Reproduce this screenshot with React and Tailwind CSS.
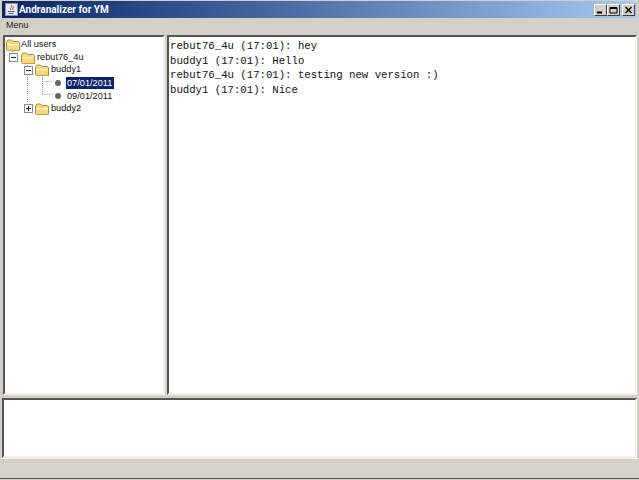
import React from 'react';

const Folder = () => (
    <svg width="16" height="14" viewBox="0 0 16 14" className="shrink-0 relative">
        <path d="M1.5 11.5V3.5L3 2h3.5L8 3.5h5.5l1 1v8H2.5z" fill="#f8d878" stroke="#a89048" strokeWidth="1" />
        <path d="M2.5 6h11.5v1.5H2.5z" fill="#fff4c0" />
        <path d="M2 12.5h12" stroke="#c8a040" strokeWidth="1" />
    </svg>
);

const Expander = ({ open }) => (
    <svg width="9" height="9" viewBox="0 0 9 9" className="shrink-0 relative">
        <rect x="0.5" y="0.5" width="8" height="8" fill="#fff" stroke="#8a8a8a" />
        <path d={open ? 'M2 4.5h5' : 'M2 4.5h5M4.5 2v5'} stroke="#222" />
    </svg>
);

const WinButton = ({ children }) => (
    <div className="w-[13px] h-[12px] bg-[#d4d0c8] border border-t-white border-l-white border-r-[#404040] border-b-[#404040] flex items-center justify-center">
        <svg width="9" height="8" viewBox="0 0 9 8">{children}</svg>
    </div>
);

const TreeRow = ({ indent, children }) => (
    <div className={`relative flex items-center h-[12.8px] ${indent}`}>{children}</div>
);

const Leaf = ({ label, selected }) => (
    <TreeRow indent="pl-[50px]">
        <span className="w-[6px] h-[6px] rounded-full bg-[#666666] shrink-0" />
        <span className={`ml-[5px] pl-[1px] pr-[2px] leading-[12px] ${selected ? 'bg-[#0a246a] text-white' : ''}`}>{label}</span>
    </TreeRow>
);

export default function App() {
    const messages = [
        'rebut76_4u (17:01): hey',
        'buddy1 (17:01): Hello',
        'rebut76_4u (17:01): testing new version :)',
        'buddy1 (17:01): Nice',
    ];

    return (
        <div className="w-[639px] h-[480px] bg-[#d4d0c8] flex flex-col overflow-hidden font-['Liberation_Sans',sans-serif]">
            {/* Title bar */}
            <div className="h-[17px] mx-[2px] mt-[1px] shrink-0 flex items-center bg-gradient-to-r from-[#0a246a] to-[#a6caf0] text-white">
                <svg width="13" height="13" viewBox="0 0 13 13" className="ml-[3px] shrink-0">
                    <rect x="0.5" y="0.5" width="12" height="12" fill="#e8e8f0" stroke="#8890b0" />
                    <path d="M6 2c2 2-2 3 0 5M8 3c1 2-1 2 0 4" stroke="#d06020" fill="none" />
                    <path d="M3 8.5h6.5M3.5 10.5h5" stroke="#4060a0" />
                </svg>
                <span className="ml-[1px] text-[10px] font-bold leading-none font-['Roboto',sans-serif]">Andranalizer for YM</span>
                <div className="ml-auto mr-[2px] flex items-center">
                    <WinButton><path d="M1 6.5h5" stroke="#000" strokeWidth="2" /></WinButton>
                    <WinButton><path d="M1 1.5h7v5.5H1zM1 2.5h7" fill="none" stroke="#000" /></WinButton>
                    <div className="ml-[2px]">
                        <WinButton><path d="M1.5 1l6 6M7.5 1l-6 6" stroke="#000" strokeWidth="1.4" /></WinButton>
                    </div>
                </div>
            </div>

            {/* Menu */}
            <div className="h-[14px] mt-[1px] shrink-0 flex items-center pl-[6px] text-[9px] text-[#222]">Menu</div>

            {/* Split panes */}
            <div className="h-[360px] mt-[2px] shrink-0 flex pl-[3px] pr-[2px] gap-[2px]">
                <div className="relative w-[162px] bg-white border-2 border-t-[#555555] border-l-[#555555] border-r-[#f4f2ec] border-b-[#f4f2ec] pt-[1.4px] text-[9.2px] text-[#111]">
                    {/* connector lines */}
                    <svg width="60" height="80" className="absolute left-0 top-0">
                        <path d="M7.5 12V15M22.5 24V66M37.5 36V57.5M37.5 44.5H47M37.5 57.5H47" fill="none" stroke="#a0a0a0" strokeDasharray="1 1" />
                    </svg>
                    <TreeRow indent=""><Folder /><span>All users</span></TreeRow>
                    <TreeRow indent="pl-[4px]"><Expander open /><span className="w-[2px]" /><Folder /><span className="ml-[1px]">rebut76_4u</span></TreeRow>
                    <TreeRow indent="pl-[19px]"><Expander open /><span className="w-[1px]" /><Folder /><span className="ml-[1px]">buddy1</span></TreeRow>
                    <Leaf label="07/01/2011" selected />
                    <Leaf label="09/01/2011" />
                    <TreeRow indent="pl-[19px]"><Expander /><span className="w-[1px]" /><Folder /><span className="ml-[1px]">buddy2</span></TreeRow>
                </div>
                <div className="flex-1 bg-white border-2 border-t-[#555555] border-l-[#555555] border-r-[#f4f2ec] border-b-[#f4f2ec] pt-[2px] pl-[1px] font-['Liberation_Mono',monospace] text-[10.67px] leading-[14.5px] text-[#111]">
                    {messages.map((line) => (
                        <div key={line}>{line}</div>
                    ))}
                </div>
            </div>

            {/* Input box */}
            <div className="h-[60px] mt-[3px] mx-[2px] shrink-0 bg-white border-2 border-t-[#555555] border-l-[#555555] border-r-[#f4f2ec] border-b-[#f4f2ec]" />

            {/* Status bar */}
            <div className="flex-1 mb-[1px] border-t border-[#f4f2ec] border-b border-b-[#555555] bg-[#d6d2c8]" />
        </div>
    );
}
